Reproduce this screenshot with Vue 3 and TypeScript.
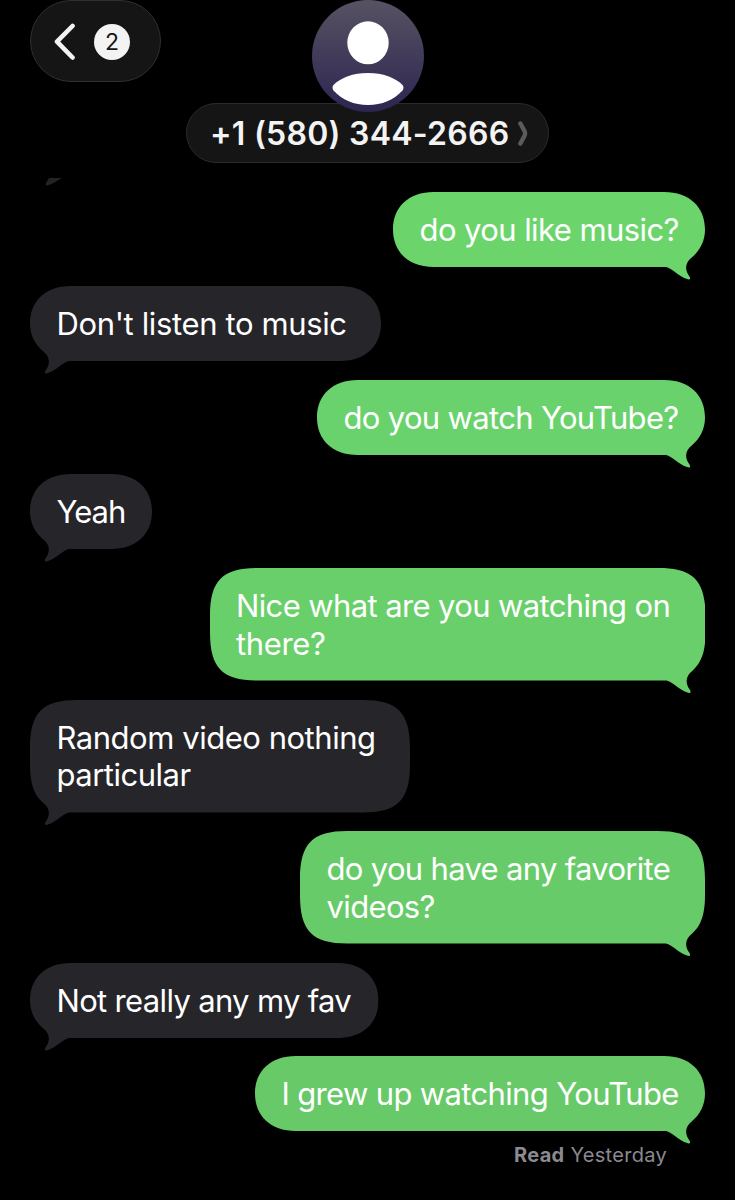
<script setup lang="ts">
interface Message {
  id: string
  sent: boolean
  lines: string[]
  width: number
  color: string
}

const messages: Message[] = [
  { id: 'm1', sent: true, lines: ['do you like music?'], width: 312, color: '#6bd56c' },
  { id: 'm2', sent: false, lines: ["Don't listen to music"], width: 351, color: '#26252a' },
  { id: 'm3', sent: true, lines: ['do you watch YouTube?'], width: 388, color: '#6ad26c' },
  { id: 'm4', sent: false, lines: ['Yeah'], width: 122, color: '#26252a' },
  { id: 'm5', sent: true, lines: ['Nice what are you watching on', 'there?'], width: 495.5, color: '#69cf6a' },
  { id: 'm6', sent: false, lines: ['Random video nothing', 'particular'], width: 380, color: '#26252a' },
  { id: 'm7', sent: true, lines: ['do you have any favorite', 'videos?'], width: 405, color: '#68cb69' },
  { id: 'm8', sent: false, lines: ['Not really any my fav'], width: 348.5, color: '#26252a' },
  { id: 'm9', sent: true, lines: ['I grew up watching YouTube'], width: 450, color: '#67c968' },
]

const heightOf = (m: Message) => 37.5 * (m.lines.length + 1)

// Outline of a bubble whose tail hangs from the bottom right corner.
function outline(m: Message): string {
  const w = m.width
  const h = heightOf(m)
  const tall = m.lines.length > 1
  const r = tall ? 48 : 37.5
  const cx = tall ? 12.5 : 15
  const cy = tall ? 12.5 : 15.5
  const f = tall ? 47 : 41
  return [
    `M0 ${r}C0 ${cy} ${cx} 0 ${f} 0H${w - f}`,
    `C${w - cx} 0 ${w} ${cy} ${w} ${r}V${h - r}`,
    tall
      ? `C${w} ${h - 27} ${w - 5} ${h - 17} ${w - 13} ${h - 9.8}`
      : `C${w} ${h - 26} ${w - 5} ${h - 16.5} ${w - 13} ${h - 9.8}`,
    `C${w - 19.5} ${h - 5} ${w - 21} ${h + 2} ${w - 15.5} ${h + 9.5}`,
    `C${w - 14} ${h + 12} ${w - 15.5} ${h + 13.2} ${w - 18} ${h + 12}`,
    `C${w - 27} ${h + 9} ${w - 33} ${h + 1} ${w - 39} ${h}`,
    `H${f}C${cx} ${h} 0 ${h - cy} 0 ${h - r}Z`,
  ].join('')
}
</script>

<template>
  <main class="phone">
    <header class="top">
      <button class="back" aria-label="Back">
        <svg class="chevron" width="22" height="38" viewBox="0 0 22 38">
          <path d="M19.500 3 4 18.700 19.500 34.500" />
        </svg>
        <span class="count">2</span>
      </button>
      <div class="contact">
        <svg class="avatar" width="112" height="112" viewBox="0 0 112 112">
          <defs>
            <linearGradient id="avatarFill" x1="0" y1="0" x2="0" y2="1">
              <stop offset="0" stop-color="#575263" />
              <stop offset="1" stop-color="#2d2550" />
            </linearGradient>
          </defs>
          <circle cx="56" cy="56" r="56" fill="url(#avatarFill)" />
          <ellipse cx="56" cy="42.8" rx="20.7" ry="21.5" fill="#fff" />
          <path d="M21.5 85C29 77.5 41 73 56 73s27 4.500 34.500 12q2 2.700 0 5.500C82 100 70 105 56 105S30 100 21.500 90.500q-2-2.800 0-5.500Z" fill="#fff" />
        </svg>
        <div class="name">
          <span class="number">+1 (580) 344-2666</span>
          <svg class="more" width="10" height="25" viewBox="0 0 10 25">
            <path d="M2.400 2.500 6.600 10.200Q7.500 12.200 6.600 14.500L2.400 22.500" />
          </svg>
        </div>
      </div>
    </header>

    <svg class="remnant" width="18" height="9" viewBox="0 0 18 9">
      <path d="M4 0H17C12 2.500 8 6 2.500 7.500Q0 7.600 1 5Z" />
    </svg>

    <section class="thread">
      <article
        v-for="m in messages"
        :key="m.id"
        class="bubble"
        :class="m.sent ? 'sent' : 'received'"
        :style="{ width: m.width + 'px' }"
      >
        <svg class="shape" :width="m.width" :height="heightOf(m) + 14">
          <path :d="outline(m)" :fill="m.color" />
        </svg>
        <p class="text">
          <span v-for="(line, i) in m.lines" :key="i" class="line" :class="m.id + '-' + i">{{ line }}</span>
        </p>
      </article>
    </section>
    <footer class="receipt"><b>Read</b> Yesterday</footer>
  </main>
</template>

<style>
body {
  margin: 0;
  background: #000;
}
</style>

<style scoped>
.phone {
  width: 735px;
  height: 1200px;
  box-sizing: border-box;
  overflow: hidden;
  background: #000;
  color: #fff;
  font-family: Inter, "Liberation Sans", sans-serif;
}
.top {
  display: grid;
  grid-template-columns: 1fr;
  height: 178px;
}
.top > * {
  grid-area: 1 / 1;
}
.back {
  display: flex;
  align-items: center;
  box-sizing: border-box;
  width: 131px;
  height: 82px;
  margin: 0 0 0 30px;
  padding: 1px 0 0 22px;
  border: 1.5px solid #303030;
  border-radius: 41px;
  background: #151515;
}
.chevron path {
  fill: none;
  stroke: #f3f3f3;
  stroke-width: 4.6;
  stroke-linecap: round;
  stroke-linejoin: round;
}
.count {
  width: 36px;
  height: 36px;
  margin-left: 19px;
  border-radius: 50%;
  background: #f3f3f3;
  color: #161616;
  font: 400 23px/36px Inter, sans-serif;
  text-align: center;
}
.contact {
  display: flex;
  flex-direction: column;
  align-items: center;
  justify-self: center;
}
.avatar {
  position: relative;
  z-index: 1;
  flex: none;
}
.name {
  display: flex;
  align-items: center;
  box-sizing: border-box;
  width: 363px;
  height: 60px;
  margin-top: -9px;
  padding: 1px 0 0 23px;
  border: 1.5px solid #2b2b2b;
  border-radius: 30px;
  background: #151515;
}
.number {
  width: 299px;
  color: #f3f3f3;
  font-size: 32px;
  font-weight: 640;
  line-height: 40px;
  letter-spacing: 0.25px;
  white-space: nowrap;
}
.more {
  margin-left: 9px;
}
.more path {
  fill: none;
  stroke: #5b5b5b;
  stroke-width: 4.4;
  stroke-linecap: round;
}
.remnant {
  display: block;
  margin-left: 45px;
  fill: #232326;
}
.thread {
  display: flex;
  flex-direction: column;
  gap: 19px;
  margin-top: 5px;
  padding: 0 30px;
}
.bubble {
  position: relative;
  box-sizing: border-box;
  padding: 19.25px 0 18.25px 26.5px;
}
.bubble:last-child {
  margin-top: -0.6px;
}
.sent {
  align-self: flex-end;
}
.received {
  align-self: flex-start;
}
.shape {
  position: absolute;
  top: 0;
  left: 0;
}
.received .shape {
  transform: scaleX(-1);
}
.text {
  position: relative;
  margin: 0;
  font-size: 31px;
  font-weight: 400;
  line-height: 37.5px;
  white-space: nowrap;
}
.line {
  display: block;
}
.m1-0 { letter-spacing: -0.58px; }
.m2-0 { letter-spacing: -0.37px; }
.m3-0 { letter-spacing: -0.67px; }
.m4-0 { letter-spacing: -1px; }
.m5-0 { letter-spacing: -0.62px; }
.m5-1 { letter-spacing: -0.35px; }
.m6-0 { letter-spacing: -0.47px; }
.m6-1 { letter-spacing: -0.5px; }
.m7-0 { letter-spacing: -0.68px; }
.m7-1 { letter-spacing: -0.65px; }
.m8-0 { letter-spacing: -0.67px; }
.m9-0 { letter-spacing: -0.65px; }
.receipt {
  margin: 12px 68px 0 0;
  color: #8b8a90;
  font-size: 20px;
  line-height: 24px;
  letter-spacing: 0.3px;
  text-align: right;
}
.receipt b {
  font-weight: 650;
}
</style>
